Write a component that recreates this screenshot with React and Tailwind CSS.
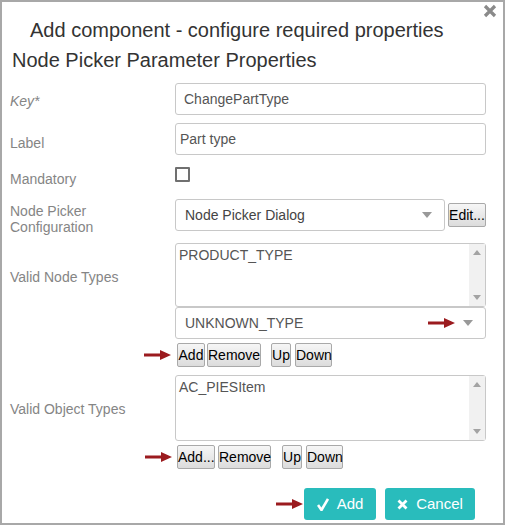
const font = { fontFamily: '"Liberation Sans", Arial, sans-serif' };

const Arrow = ({ className = "" }) => (
  <svg width="27" height="10" viewBox="0 0 27 10" className={className}>
    <path d="M0 3.5h16V0l11 5-11 5V6.5H0z" fill="#9b1b1f" />
  </svg>
);

const Caret = () => (
  <svg width="10" height="6" viewBox="0 0 10 6">
    <path d="M0 0h10L5 6z" fill="#999" />
  </svg>
);

const Btn = ({ children, w }) => (
  <button
    className={`h-[24px] ${w} border border-[#a9a9a9] rounded-[2px] bg-gradient-to-b from-[#f6f6f6] to-[#dcdcdc] text-[14px] text-black leading-none px-0`}
  >
    {children}
  </button>
);

const Row = ({ label, italic, children, labelClass = "" }) => (
  <div className="flex items-start">
    <div
      className={`w-[165px] shrink-0 text-[14px] text-[#858585] leading-[16px] ${italic ? "italic" : ""} ${labelClass}`}
    >
      {label}
    </div>
    <div className="w-[311px]">{children}</div>
  </div>
);

const Listbox = ({ value, h }) => (
  <div className={`${h} flex border border-[#c8c8c8] rounded-[3px] bg-white`}>
    <div className="flex-1 pl-[3px] pt-[2px] text-[14px] text-[#555] leading-[18px]">{value}</div>
    <div className="w-[16px] bg-[#f1f1f1] flex flex-col justify-between items-center py-[6px]">
      <svg width="8" height="5" viewBox="0 0 8 5"><path d="M0 5h8L4 0z" fill="#a3a3a3" /></svg>
      <svg width="8" height="5" viewBox="0 0 8 5"><path d="M0 0h8L4 5z" fill="#a3a3a3" /></svg>
    </div>
  </div>
);

export default function App() {
  return (
    <div
      style={font}
      className="w-[505px] h-[525px] border-2 border-[#a8a8a8] bg-white relative text-[#333]"
    >
      <button className="absolute right-[6px] top-[2px] text-[#8a8a8a]">
        <svg width="14" height="14" viewBox="0 0 14 14">
          <path d="M2 2l10 10M12 2L2 12" stroke="#8a8a8a" strokeWidth="3.2" />
        </svg>
      </button>

      <h1 className="pl-[28px] pt-[14px] text-[20px] leading-[28px] text-[#333]">
        Add component - configure required properties
      </h1>
      <h2 className="pl-[10px] pt-[2px] text-[20px] leading-[28px] text-[#333]">
        Node Picker Parameter Properties
      </h2>

      <div className="pl-[8px] pt-[9px] flex flex-col">
        <Row label="Key*" italic labelClass="pt-[10px] text-[#8f8f8f]">
          <input
            readOnly
            value="ChangePartType"
            className="w-full h-[32px] border border-[#c8c8c8] rounded-[3px] px-[8px] text-[14px] text-[#555] outline-none"
          />
        </Row>
        <div className="h-[8px]" />
        <Row label="Label" labelClass="pt-[12px]">
          <input
            readOnly
            value="Part type"
            className="w-full h-[32px] border border-[#c8c8c8] rounded-[3px] px-[4px] text-[14px] text-[#555] outline-none"
          />
        </Row>
        <div className="h-[12px]" />
        <Row label="Mandatory" labelClass="pt-[4px] h-[15px]">
          <div className="w-[15px] h-[15px] border-2 border-[#707070] rounded-[1px] bg-white" />
        </Row>
        <div className="h-[17px]" />
        <Row
          label={
            <>
              Node Picker
              <br />
              Configuration
            </>
          }
          labelClass="pt-[4px] h-[32px]"
        >
          <div className="flex items-center gap-[3px]">
            <div className="w-[270px] h-[32px] border border-[#c8c8c8] rounded-[3px] flex items-center justify-between pl-[9px] pr-[12px] text-[14px] text-[#444]">
              Node Picker Dialog
              <Caret />
            </div>
            <Btn w="w-[38px]">Edit...</Btn>
          </div>
        </Row>
        <div className="h-[12px]" />
        <Row label="Valid Node Types" labelClass="pt-[26px]">
          <Listbox value="PRODUCT_TYPE" h="h-[64px]" />
          <div className="h-[32px] border border-[#c8c8c8] rounded-[3px] flex items-center justify-between pl-[9px] pr-[12px] text-[14px] text-[#555]">
            UNKNOWN_TYPE
            <div className="flex items-center gap-[8px]">
              <Arrow />
              <Caret />
            </div>
          </div>
          <div className="relative flex items-center mt-[4px] pl-[2px]">
            <Arrow className="absolute left-[-31px] top-[7px]" />
            <Btn w="w-[28px]">Add</Btn>
            <div className="w-[2px]" />
            <Btn w="w-[54px]">Remove</Btn>
            <div className="w-[10px]" />
            <Btn w="w-[20px]">Up</Btn>
            <div className="w-[4px]" />
            <Btn w="w-[37px]">Down</Btn>
          </div>
        </Row>
        <div className="h-[8px]" />
        <Row label="Valid Object Types" labelClass="pt-[26px]">
          <Listbox value="AC_PIESItem" h="h-[66px]" />
          <div className="relative flex items-center mt-[4px] pl-[2px]">
            <Arrow className="absolute left-[-30px] top-[7px]" />
            <Btn w="w-[38px]">Add...</Btn>
            <div className="w-[3px]" />
            <Btn w="w-[53px]">Remove</Btn>
            <div className="w-[11px]" />
            <Btn w="w-[20px]">Up</Btn>
            <div className="w-[4px]" />
            <Btn w="w-[37px]">Down</Btn>
          </div>
        </Row>
      </div>

      <div className="flex items-center pl-[274px] mt-[19px]">
        <Arrow />
        <div className="w-[1px]" />
        <button className="w-[72px] h-[32px] rounded-[3px] bg-[#29bcbc] text-white text-[15px] flex items-center justify-center gap-[8px]">
          <svg width="12" height="13" viewBox="0 0 12 13">
            <path d="M1 7l3.5 5L11 1" stroke="#fff" strokeWidth="2.6" fill="none" />
          </svg>
          Add
        </button>
        <div className="w-[9px]" />
        <button className="w-[90px] h-[32px] rounded-[3px] bg-[#29bcbc] text-white text-[15px] flex items-center justify-center gap-[8px]">
          <svg width="11" height="11" viewBox="0 0 11 11">
            <path d="M1.5 1.5l8 8M9.5 1.5l-8 8" stroke="#fff" strokeWidth="2.8" />
          </svg>
          Cancel
        </button>
      </div>
    </div>
  );
}
